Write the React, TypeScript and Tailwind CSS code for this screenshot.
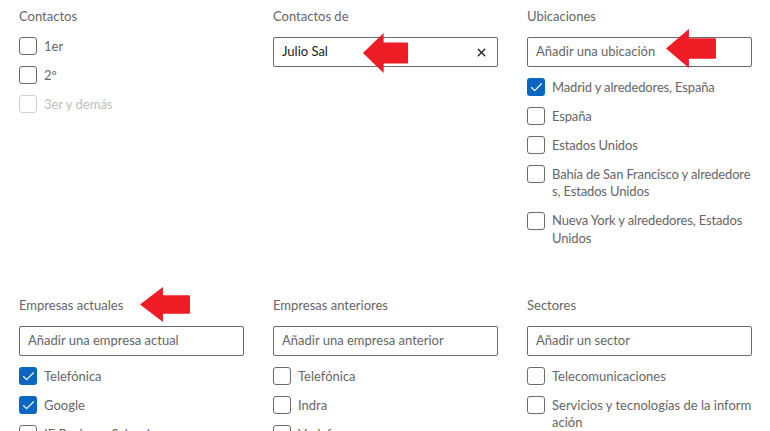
import { Check, X } from "lucide-react";

type Item = { label: string; checked?: boolean; disabled?: boolean };

function CheckRow({ label, checked, disabled }: Item) {
    return (
        <label className="flex min-h-[18px] items-start gap-[7px]">
            <span
                className={
                    "flex h-[18px] w-[18px] shrink-0 items-center justify-center rounded-[3px] " +
                    (checked
                        ? "bg-[#0a66c2]"
                        : disabled
                        ? "border border-[#d0d0d0] bg-white"
                        : "border border-[#6b6b6b] bg-white")
                }
            >
                {checked && <Check size={15} strokeWidth={1.8} className="text-white" />}
            </span>
            <span
                className={
                    "break-all pt-[0.5px] text-[13px] leading-[17.5px] " +
                    (disabled ? "text-[#bdbdbd]" : "text-[#666666]")
                }
            >
                {label}
            </span>
        </label>
    );
}

function Field({ placeholder, value }: { placeholder: string; value?: string }) {
    return (
        <div className="flex h-[30px] items-center rounded-[2px] border border-[#6b6b6b] bg-white pl-[8px] pr-[9px]">
            <input
                readOnly
                value={value ?? ""}
                placeholder={placeholder}
                className="min-w-0 flex-1 bg-transparent text-[13px] text-[#222222] outline-none placeholder:text-[#666666]"
            />
            {value && <X size={13} strokeWidth={2.6} className="text-[#222222]" />}
        </div>
    );
}

function Section({ title, children }: { title: string; children: React.ReactNode }) {
    return (
        <div className="flex flex-col">
            <h3 className="mb-[11px] text-[13px] leading-[20px] text-[#666666]">{title}</h3>
            {children}
        </div>
    );
}

function List({ items, top = 0, tight }: { items: Item[]; top?: number; tight?: boolean }) {
    return (
        <div
            className={
                "flex flex-col gap-[11px] " +
                (top ? "mt-[11px] " : "") +
                (tight ? "tracking-[-0.15px]" : "")
            }
        >
            {items.map((it) => (
                <CheckRow key={it.label} {...it} />
            ))}
        </div>
    );
}

function Arrow({ className }: { className: string }) {
    return (
        <svg viewBox="0 0 50 40" preserveAspectRatio="none" className={"absolute " + className}>
            <path
                d="M1 20 L23 1 L23 10 L48 10 Q49 10 49 11 L49 29 Q49 30 48 30 L23 30 L23 39 Z"
                fill="#ee1c25"
            />
        </svg>
    );
}

export default function App() {
    return (
        <div
            className="relative h-[431px] w-[770px] overflow-hidden bg-white px-[19px] pt-[6px]"
            style={{ fontFamily: '"Segoe UI", Lato, "Noto Sans", sans-serif' }}
        >
            <div className="grid grid-cols-[225px_225px_225px] gap-x-[29px] gap-y-[48px]">
                <Section title="Contactos">
                    <List
                        items={[
                            { label: "1er" },
                            { label: "2º" },
                            { label: "3er y demás", disabled: true },
                        ]}
                    />
                </Section>
                <Section title="Contactos de">
                    <Field placeholder="Añadir un contacto" value="Julio Sal" />
                </Section>
                <Section title="Ubicaciones">
                    <Field placeholder="Añadir una ubicación" />
                    <List
                        top={1}
                        tight
                        items={[
                            { label: "Madrid y alrededores, España", checked: true },
                            { label: "España" },
                            { label: "Estados Unidos" },
                            { label: "Bahía de San Francisco y alrededores, Estados Unidos" },
                            { label: "Nueva York y alrededores, Estados Unidos" },
                        ]}
                    />
                </Section>

                <Section title="Empresas actuales">
                    <Field placeholder="Añadir una empresa actual" />
                    <List
                        top={1}
                        items={[
                            { label: "Telefónica", checked: true },
                            { label: "Google", checked: true },
                            { label: "IE Business School" },
                        ]}
                    />
                </Section>
                <Section title="Empresas anteriores">
                    <Field placeholder="Añadir una empresa anterior" />
                    <List
                        top={1}
                        items={[{ label: "Telefónica" }, { label: "Indra" }, { label: "Vodafone" }]}
                    />
                </Section>
                <Section title="Sectores">
                    <Field placeholder="Añadir un sector" />
                    <List
                        top={1}
                        items={[
                            { label: "Telecomunicaciones" },
                            { label: "Servicios y tecnologías de la información" },
                            { label: "Software" },
                        ]}
                    />
                </Section>
            </div>

            <Arrow className="left-[362px] top-[32px] h-[42px] w-[47px]" />
            <Arrow className="left-[139px] top-[286px] h-[37px] w-[52px]" />
            <Arrow className="left-[665px] top-[28px] h-[41px] w-[52px]" />
        </div>
    );
}
